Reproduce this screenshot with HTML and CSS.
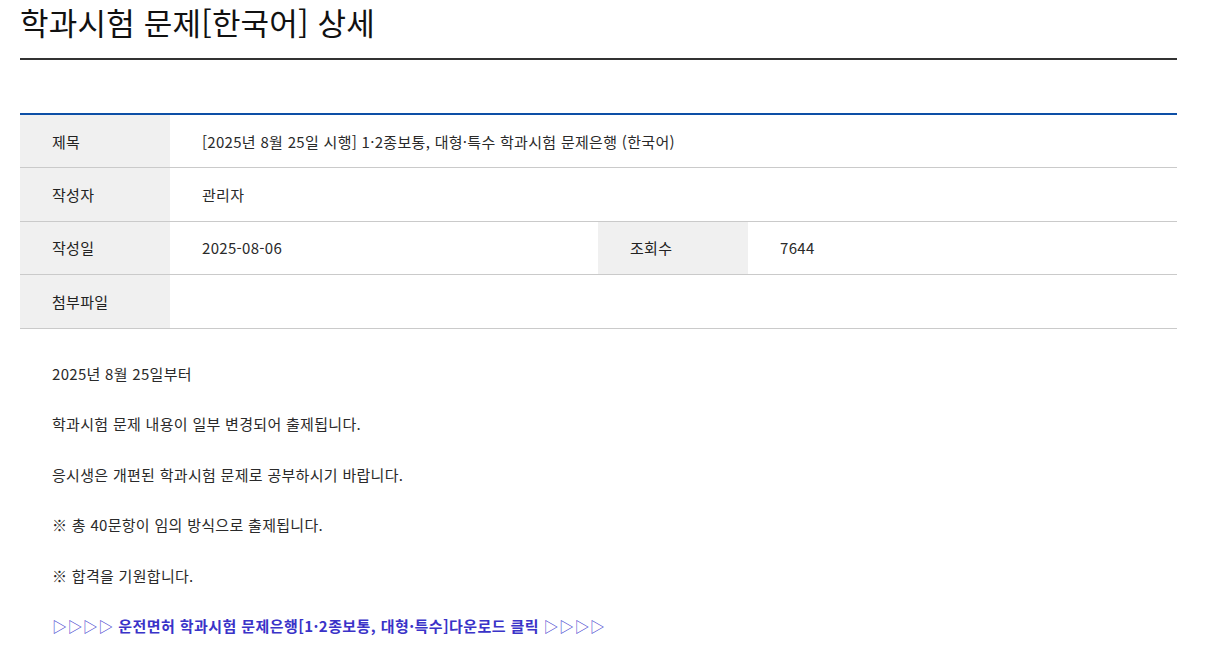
FILE: index.html
```html
<!DOCTYPE html>
<html lang="ko">
<head>
<meta charset="utf-8">
<link rel="stylesheet" href="styles.css">
</head>
<body>
<div class="page">
  <h1 class="title">학과시험 문제[한국어] 상세</h1>
  <table class="info">
    <tr>
      <th>제목</th>
      <td colspan="3">[2025년 8월 25일 시행] 1·2종보통, 대형·특수 학과시험 문제은행 (한국어)</td>
    </tr>
    <tr>
      <th>작성자</th>
      <td colspan="3">관리자</td>
    </tr>
    <tr>
      <th>작성일</th>
      <td class="half">2025-08-06</td>
      <th>조회수</th>
      <td>7644</td>
    </tr>
    <tr>
      <th>첨부파일</th>
      <td colspan="3"></td>
    </tr>
  </table>
  <div class="content">
    <p>2025년 8월 25일부터</p>
    <p>학과시험 문제 내용이 일부 변경되어 출제됩니다.</p>
    <p>응시생은 개편된 학과시험 문제로 공부하시기 바랍니다.</p>
    <p>※ 총 40문항이 임의 방식으로 출제됩니다.</p>
    <p>※ 합격을 기원합니다.</p>
    <p class="link"><span class="arrows">▷▷▷▷</span> 운전면허 학과시험 문제은행[1·2종보통, 대형·특수]다운로드 클릭 <span class="arrows">▷▷▷▷</span></p>
  </div>
</div>
</body>
</html>
```
FILE: styles.css
```css
html, body {
  margin: 0;
  padding: 0;
  background: #fff;
}
body {
  font-family: "Noto Sans CJK KR", "Noto Sans", sans-serif;
  color: #333;
}
.page {
  width: 1157px;
  margin-left: 20px;
}
.title {
  margin: 0;
  padding-top: 2px;
  font-size: 31px;
  font-weight: 400;
  line-height: 40px;
  color: #111;
  letter-spacing: 0.2px;
  border-bottom: 2px solid #333;
  box-sizing: border-box;
  height: 60px;
}
.info {
  width: 100%;
  margin-top: 53px;
  border-collapse: collapse;
  border-top: 2px solid #0d4fa6;
  font-size: 15px;
}
.info th, .info td {
  height: 53.6px;
  padding: 0 0 0 32px;
  text-align: left;
  border-bottom: 1px solid #cacaca;
  box-sizing: border-box;
  letter-spacing: 0.3px;
}
.info th {
  width: 150px;
  background: #f0f0f0;
  font-weight: 400;
  color: #222;
}
.info td {
  color: #2a2a2a;
}
.info td.half {
  width: 428px;
}
.content {
  padding: 32px 32px 0;
  font-size: 15px;
  letter-spacing: 0.3px;
  color: #2a2a2a;
}
.content p {
  margin: 0 0 24px;
  line-height: 26.4px;
}
.content .link {
  color: #3a33c8;
  font-weight: 700;
  letter-spacing: 0.42px;
}
.arrows {
  font-weight: 400;
  color: #4a44d0;
}
```
